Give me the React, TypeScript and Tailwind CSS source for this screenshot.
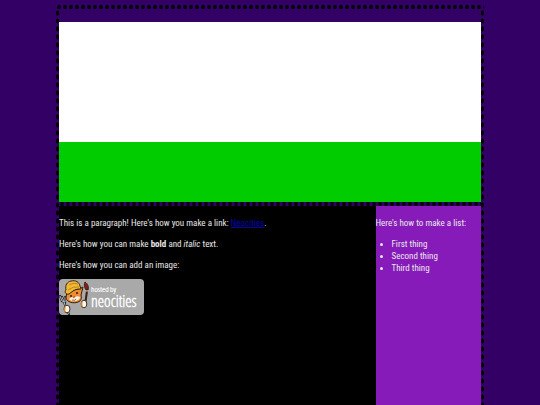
import React from "react";

const listItems = ["First thing", "Second thing", "Third thing"];

const dotsRow =
  "h-1 shrink-0 bg-[radial-gradient(2px_3px_at_center,#000000_65%,transparent_100%)] bg-[length:6px_4px]";
const dotsColumn =
  "w-[3px] shrink-0 bg-[radial-gradient(2px_3px_at_center,#000000_65%,transparent_100%)] bg-[length:3px_8px]";

const badgeFont = "'Open Sans Condensed Light', 'Roboto Condensed', sans-serif";

function NeocitiesBadge() {
  return (
    <svg viewBox="0 0 85 36" className="h-9 w-[85px]" role="img" aria-label="Hosted by Neocities">
      <rect width="85" height="36" rx="4" fill="#a9a9a9" />
      {/* fork */}
      <path d="M3 18l2 5 3 9 2 3M1 17l2 5 3 1v-5" fill="none" stroke="#242424" strokeWidth="2.2" strokeLinecap="round" />
      <path d="M3 18l2 5 3 9 2 3M1 17l2 5 3 1v-5" fill="none" stroke="#aeb4b8" strokeWidth="1" />
      {/* brush */}
      <path d="M28 12l-2 14" stroke="#38211c" strokeWidth="2" />
      <path d="M27 11c-2-3-2-6-1-8 3 2 4 5 3 8z" fill="#8a1d1d" stroke="#2c1010" strokeWidth=".8" />
      <path d="M26 12h3" stroke="#d4b475" />
      {/* cat head */}
      <path
        d="M8 12l-1 7c1 4 7 6 12 4 3-1 4-4 3-7l2-8-4 2z"
        fill="#ee8d35"
        stroke="#30200d"
        strokeWidth="1"
      />
      <path d="M10 20c2-2 3-2 5-1 2-2 4-2 6-1 0 4-8 6-11 2z" fill="#fff0dd" />
      <circle cx="12" cy="17" r="1" fill="#281b18" />
      <circle cx="18" cy="14" r="1" fill="#281b18" />
      <path d="M14 18l2-1-1 2z" fill="#8c332a" />
      <path d="M13 21q3 1 4-1" fill="none" stroke="#4e2418" strokeWidth=".7" />
      {/* hard hat */}
      <path
        d="M7 11C6 6 8 3 12 2c5-1 8 1 9 5l1 3c-3 0-5 0-8 2l-4 3c-3 1-5-2-3-4z"
        fill="#f2b832"
        stroke="#39270c"
        strokeWidth="1"
      />
      <path d="M10 6q4-3 9-1M9 11q5-4 11-3" fill="none" stroke="#a87820" strokeWidth=".8" />
      {/* paws */}
      <ellipse cx="8" cy="30" rx="3" ry="3.8" fill="#fff8ed" stroke="#46301b" />
      <ellipse cx="25" cy="25" rx="2.8" ry="3.8" fill="#fff8ed" stroke="#46301b" />
      <path d="M6 28q-1 3 0 5M23 23q-1 2 0 4" fill="none" stroke="#d9822b" strokeWidth="1.5" />
      <text x="32" y="13" fill="#fff" stroke="#fff" strokeWidth=".2" fontSize="8" fontFamily={badgeFont}>
        hosted by
      </text>
      <text x="32" y="28" fill="#fff" stroke="#fff" strokeWidth=".4" fontSize="16" fontFamily={badgeFont}>
        neocities
      </text>
    </svg>
  );
}

export default function App() {
  return (
    <div className="flex min-h-screen flex-col bg-[#330066] px-14 pt-[5px] font-['Roboto_Condensed','DejaVu_Sans_Condensed',sans-serif] text-[9px] leading-3 text-[#e8e8e8]">
      <div className={dotsRow} />
      <div className="flex grow">
        <div className={dotsColumn} />
        <div className="flex min-w-0 grow flex-col">
          <header className="pt-[13px]">
            <div className="h-[120px] bg-white" />
            <div className="h-[60px] bg-[#00cc00]" />
            <div className={dotsRow} />
          </header>
          <div className="flex grow">
            <main className="w-3/4 bg-black pt-[11px]">
              <p className="mb-[9px]">
                This is a paragraph! Here's how you make a link:{" "}
                <a href="https://neocities.org" className="text-[#0000bb] underline">
                  Neocities
                </a>
                .
              </p>
              <p className="mb-[9px]">
                Here's how you can make <strong>bold</strong> and <em>italic</em> text.
              </p>
              <p className="mb-[8px]">Here's how you can add an image:</p>
              <NeocitiesBadge />
            </main>
            <aside className="w-1/4 bg-[#861bba] pt-[11px]">
              <p className="mb-[9px]">Here's how to make a list:</p>
              <ul className="list-disc pl-4">
                {listItems.map((item) => (
                  <li key={item}>{item}</li>
                ))}
              </ul>
            </aside>
          </div>
        </div>
        <div className={dotsColumn} />
      </div>
    </div>
  );
}
